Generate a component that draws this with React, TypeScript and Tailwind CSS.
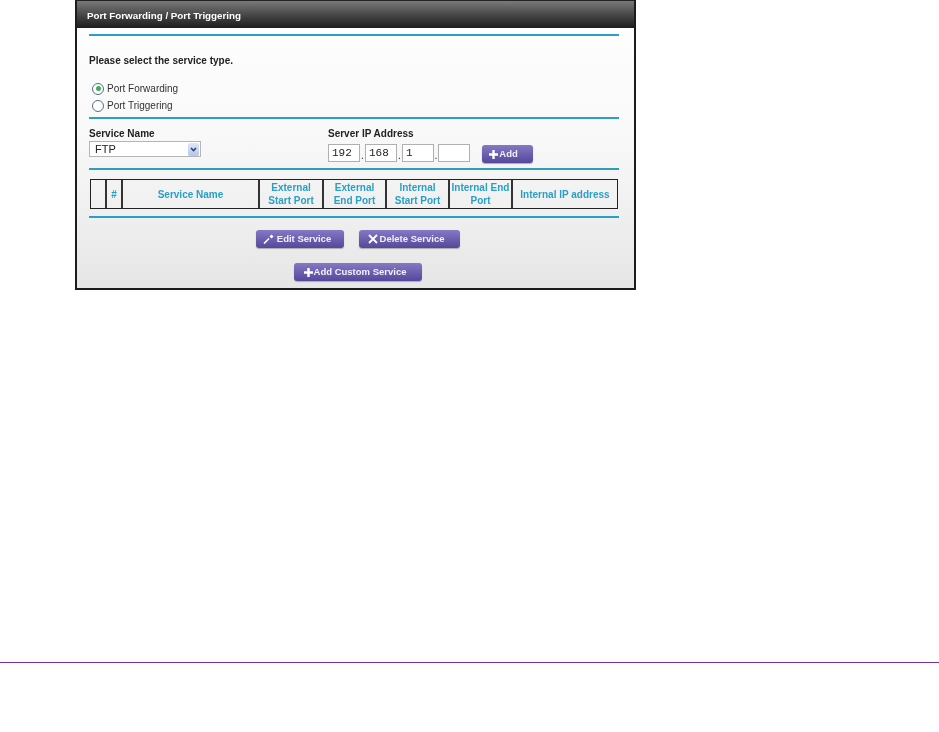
import React from 'react';

const sans = "font-['Liberation_Sans',Arial,sans-serif]";

const columns = [
  { label: '', width: 'w-[16px]' },
  { label: '#', width: 'w-[16px]' },
  { label: 'Service Name', width: 'w-[137px]' },
  { label: 'External Start Port', width: 'w-[64px]' },
  { label: 'External End Port', width: 'w-[63px]' },
  { label: 'Internal Start Port', width: 'w-[63px]' },
  { label: 'Internal End Port', width: 'w-[63px]' },
  { label: 'Internal IP address', width: 'flex-1' },
];

function Rule() {
  return <div className="h-[2px] bg-[#2b9fc9]" />;
}

function Radio({ checked, label }: { checked?: boolean; label: string }) {
  return (
    <div className="flex h-[17px] items-center">
      <span className="flex h-[12px] w-[12px] items-center justify-center rounded-full border border-[#5a6b85] bg-white">
        {checked && <span className="h-[5px] w-[5px] rounded-full bg-[#3fae5a]" />}
      </span>
      <span className="ml-[3px] text-[10px] text-[#333]">{label}</span>
    </div>
  );
}

function IpBox({ value, width }: { value: string; width: string }) {
  return (
    <div className={`flex h-[18px] ${width} items-center border border-[#b0b0b0] bg-white pl-[3px] font-['Liberation_Mono',monospace] text-[11px] text-[#222]`}>
      {value}
    </div>
  );
}

function PurpleButton({ children, className }: { children: React.ReactNode; className: string }) {
  return (
    <div className={`flex h-[18px] ${className} items-center justify-center rounded-[3px] bg-gradient-to-b from-[#8579c6] to-[#56479a] text-[9.5px] font-bold text-[#f2f0fa] shadow-[0_1px_1px_#aaa]`}>
      {children}
    </div>
  );
}

function PlusIcon() {
  return (
    <svg width="9" height="9" viewBox="0 0 9 9" className="mr-[1px]">
      <path d="M3.3 0h2.4v3.3H9v2.4H5.7V9H3.3V5.7H0V3.3h3.3z" fill="#fff" />
    </svg>
  );
}

export default function App() {
  return (
    <div className={`relative h-[732px] w-[939px] overflow-hidden bg-white ${sans}`}>
      <div className="ml-[75px] flex h-[290px] w-[561px] flex-col border-x-2 border-b-2 border-[#1c1c1c] bg-gradient-to-b from-white via-[#f8f8f8] to-[#e6e6e6] blur-[0.4px]">
        <div className="flex h-[28px] items-center border-t border-[#222] bg-gradient-to-b from-[#7a7a7a] to-[#1d1d1d] pl-[10px] pt-[3px] text-[9.8px] font-bold text-white">
          Port Forwarding / Port Triggering
        </div>
        <div className="flex flex-1 flex-col pl-[12px] pr-[15px]">
          <div className="mt-[6px]"><Rule /></div>
          <div className="mt-[18px] h-[14px] text-[10px] leading-[14px] font-bold text-[#222]">Please select the service type.</div>
          <div className="mt-[12px] ml-[3px]">
            <Radio checked label="Port Forwarding" />
            <Radio label="Port Triggering" />
          </div>
          <div className="mt-[3px]"><Rule /></div>
          <div className="mt-[8px] flex h-[33px]">
            <div className="w-[239px]">
              <div className="h-[14px] text-[10px] leading-[14px] font-bold text-[#222]">Service Name</div>
              <div className="flex h-[16px] w-[112px] items-center justify-between border border-[#b5b5b5] bg-white pl-[5px] pr-[1px] text-[11px] text-[#222]">
                FTP
                <span className="flex h-[13px] w-[11px] items-center justify-center rounded-[2px] bg-gradient-to-b from-[#dfe8f8] to-[#b4c7ea]">
                  <svg width="7" height="5" viewBox="0 0 7 5"><path d="M1 1l2.5 2.5L6 1" fill="none" stroke="#30406a" strokeWidth="1.6" /></svg>
                </span>
              </div>
            </div>
            <div>
              <div className="h-[14px] text-[10px] leading-[14px] font-bold text-[#222]">Server IP Address</div>
              <div className="mt-[3px] flex items-start text-[10px] text-[#333]">
                <IpBox value="192" width="w-[32px]" />
                <span className="flex h-[18px] w-[5px] items-end justify-center leading-[12px]">.</span>
                <IpBox value="168" width="w-[32px]" />
                <span className="flex h-[18px] w-[5px] items-end justify-center leading-[12px]">.</span>
                <IpBox value="1" width="w-[32px]" />
                <span className="flex h-[18px] w-[4px] items-end justify-center leading-[12px]">.</span>
                <IpBox value="" width="w-[32px]" />
                <div className="ml-[12px] mt-[1px]">
                  <PurpleButton className="w-[51px] pr-[8px]"><PlusIcon />Add</PurpleButton>
                </div>
              </div>
            </div>
          </div>
          <div className="mt-[8px] h-[2px] bg-[#2f9fb5]" />
          <div className="mt-[9px] ml-[1px] mr-[1px] flex h-[30px] border border-[#222]">
            {columns.map((col, i) => (
              <div
                key={i}
                className={`flex ${col.width} items-center justify-center ${i < columns.length - 1 ? 'border-r-2 border-[#333]' : ''} text-center text-[10px] leading-[13px] font-bold text-[#2a9fc6]`}
              >
                {col.label}
              </div>
            ))}
          </div>
          <div className="mt-[7px]"><Rule /></div>
          <div className="mt-[12px] ml-[167px] flex">
            <PurpleButton className="w-[88px] pr-[6px]">
              <svg width="11" height="10" viewBox="0 0 11 10" className="mr-[3px]">
                <path d="M1 9.5L6 4.5" stroke="#fff" strokeWidth="1.6" />
                <path d="M6.5 2.5l2-2 2 2-2 2z" fill="#fff" />
              </svg>
              Edit Service
            </PurpleButton>
            <div className="ml-[15px]">
              <PurpleButton className="w-[101px] pr-[7px]">
                <svg width="10" height="10" viewBox="0 0 10 10" className="mr-[2px]">
                  <path d="M1 1l8 8M9 1l-8 8" stroke="#fff" strokeWidth="1.8" />
                </svg>
                Delete Service
              </PurpleButton>
            </div>
          </div>
          <div className="mt-[15px] ml-[205px]">
            <PurpleButton className="w-[128px] pr-[6px]"><PlusIcon />Add Custom Service</PurpleButton>
          </div>
        </div>
      </div>
      <div className="mt-[372px] h-px bg-[#7a2f9f]" />
    </div>
  );
}
